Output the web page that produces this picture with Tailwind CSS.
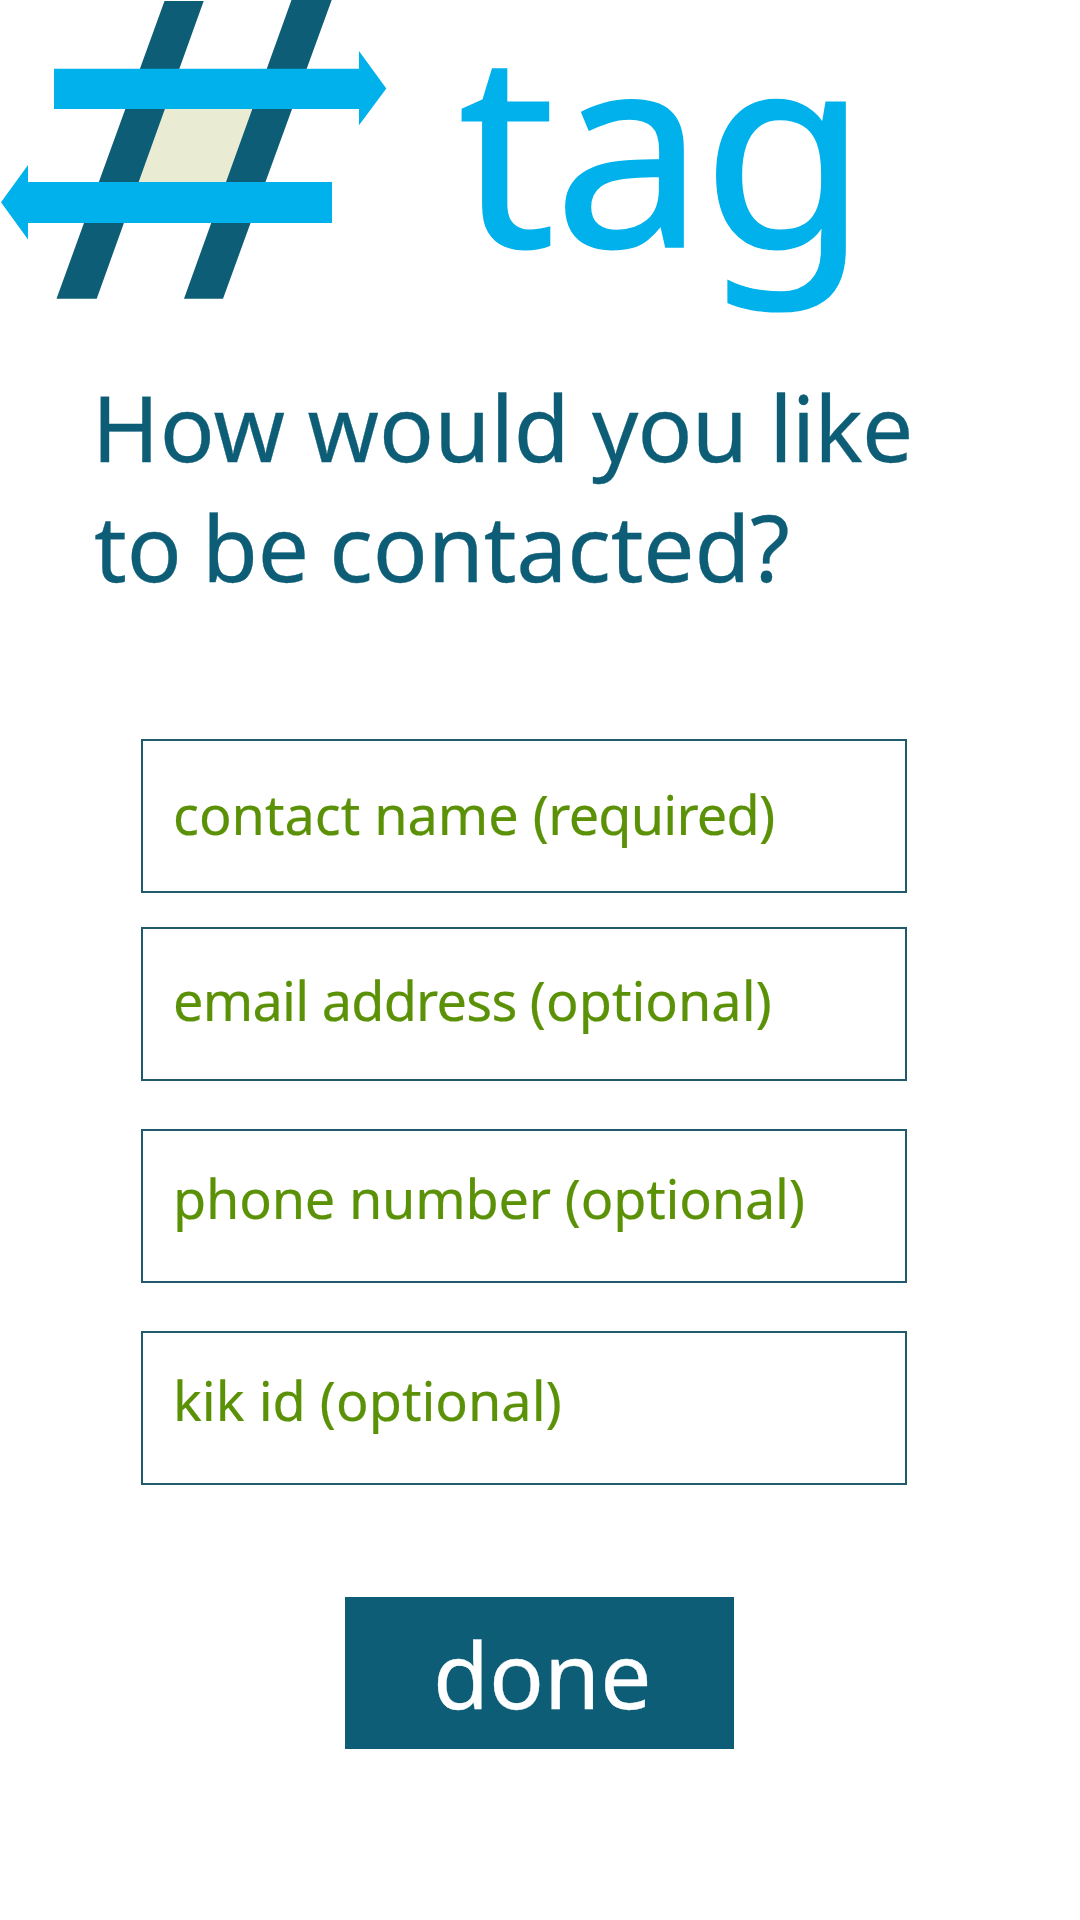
<!DOCTYPE html>
<html lang="en">
<head>
<meta charset="utf-8">
<title>#tag</title>
<script src="https://cdn.jsdelivr.net/npm/@tailwindcss/browser@4"></script>
</head>
<body class="bg-white">
<main class="w-[1080px] h-[1920px] bg-white font-['Noto_Sans',sans-serif] flex flex-col items-start">
  <header class="flex h-[367px] items-start">
    <!-- Hash mark built from two slanted bars and two arrows -->
    <svg class="w-[458px] h-[310px] shrink-0" viewBox="0 0 458 310" aria-hidden="true">
      <path fill="#e9ebd3" d="M160 100h104l-34 90h-94z"/>
      <path fill="#0c5d75" d="M164.5 1h39.2L96.7 298.7H56.5zM291.5 0h40.2L223 298.7h-39z"/>
      <path fill="#00b1eb" d="M54 68.7h305V51l27.3 37.5L359 125.3V109H54zM332 182v41H28v16.5L1 202.3 28 165v17z"/>
    </svg>
    <div class="text-[270px] leading-[284px] text-[#00b1eb] whitespace-nowrap [-webkit-text-stroke:1.5px_#00b1eb]"><span class="tracking-[-2px]">t</span><span class="tracking-[-3px]">a</span>g</div>
  </header>

  <h1 class="ml-[92px] h-[372px] text-[91px] leading-[120px] text-[#0c5d75] whitespace-nowrap [word-spacing:-1.5px] [-webkit-text-stroke:0.3px_#0c5d75]"><span class="tracking-[0.4px]">How</span> would <span class="tracking-[-0.9px]">you</span> <span class="tracking-[-0.9px]">like</span><br><span class="ml-[2px] [word-spacing:-3px] tracking-[-0.2px]">to be contacted?</span></h1>

  <form class="ml-[141px] w-[766px] flex flex-col text-[54px] leading-[80px] text-[#5a9106] whitespace-nowrap [-webkit-text-stroke:0.2px_#5a9106]">
    <div class="h-[154px] border-2 border-[#205a6c] pl-[30px] pt-[33px]">contact name <span class="tracking-[-0.8px]">(required)</span></div>
    <div class="mt-[34px] h-[154px] border-2 border-[#205a6c] pl-[30px] pt-[31px]"><span class="tracking-[-0.75px]">email address </span>(optional)</div>
    <div class="mt-12 h-[154px] border-2 border-[#205a6c] pl-[30px] pt-[27px] tracking-[-0.2px]">phone number (optional)</div>
    <div class="mt-12 h-[154px] border-2 border-[#205a6c] pl-[30px] pt-[27px]">kik id (optional)</div>
  </form>

  <button class="ml-[345px] mt-[112px] w-[389px] h-[152px] bg-[#0c5d75] text-white text-[91px] leading-[120px] flex items-start pl-[88px] pt-[17px] [-webkit-text-stroke:0.3px_white]">done</button>
</main>
</body>
</html>
